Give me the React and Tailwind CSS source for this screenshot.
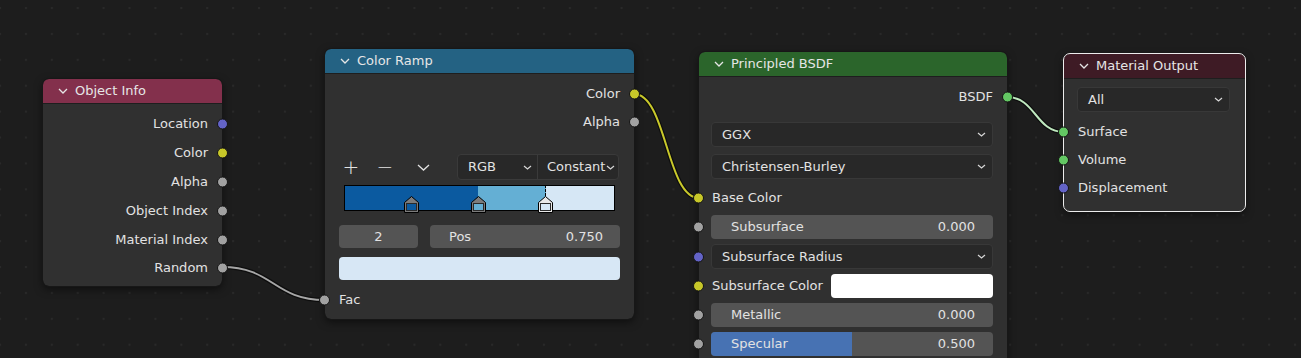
import React from 'react';

const SOCK = {
  vector: 'bg-[#6363c7]',
  color: 'bg-[#c7c729]',
  float: 'bg-[#a1a1a1]',
  shader: 'bg-[#63c763]',
};

const Chevron = ({ className = '' }) => (
  <svg width="10" height="6" viewBox="0 0 10 6" className={className}>
    <path d="M1 1 L5 5 L9 1" fill="none" stroke="currentColor" strokeWidth="1.3" />
  </svg>
);

const SmallChevron = () => (
  <svg width="9" height="5" viewBox="0 0 9 5" className="text-[#d8d8d8]">
    <path d="M1 1 L4.5 4 L8 1" fill="none" stroke="currentColor" strokeWidth="1.2" />
  </svg>
);

const Socket = ({ kind, side }) => (
  <span
    className={`absolute top-1/2 -translate-y-1/2 w-[11px] h-[11px] rounded-full border border-[#141414] ${
      side === 'left' ? '-left-[6px]' : '-right-[6px]'
    } ${SOCK[kind]}`}
  />
);

const Node = ({ title, header, className, selected, children }) => (
  <div
    className={`absolute rounded-[6px] bg-[#303030] shadow-[0_3px_8px_rgba(0,0,0,0.55)] outline outline-1 ${
      selected ? 'outline-[#ececec]' : 'outline-[#171717]'
    } ${className}`}
  >
    <div className={`h-[25px] flex items-center pl-[15px] gap-[7px] rounded-t-[6px] border-b border-[#1e1e1e] text-[#e6e6e6] ${header}`}>
      <Chevron />
      <span>{title}</span>
    </div>
    {children}
  </div>
);

const OutRow = ({ label, kind, h = 'h-[28px]' }) => (
  <div className={`relative flex items-center justify-end pr-[14px] ${h}`}>
    <span>{label}</span>
    <Socket kind={kind} side="right" />
  </div>
);

const InRow = ({ label, kind, pl = 'pl-[14px]' }) => (
  <div className={`relative flex items-center h-[28px] ${pl}`}>
    <Socket kind={kind} side="left" />
    <span>{label}</span>
  </div>
);

const Dropdown = ({ label, className = '' }) => (
  <div className={`h-[25px] flex items-center justify-between pl-[10px] pr-[6px] rounded-[4px] bg-[#282828] border border-[#383838] ${className}`}>
    <span>{label}</span>
    <SmallChevron />
  </div>
);

const NumField = ({ label, value, fill }) => (
  <div className="relative h-[24px] rounded-[4px] bg-[#545454] overflow-hidden">
    {fill && <div className="absolute inset-y-0 left-0 w-1/2 bg-[#4772b3]" />}
    <div className="relative h-full flex items-center justify-between pl-[20px] pr-[18px]">
      <span>{label}</span>
      <span>{value}</span>
    </div>
  </div>
);

const Marker = ({ x, fill, active }) => (
  <svg
    width="15"
    height="17"
    viewBox="0 0 15 17"
    className="absolute top-[11px]"
    style={{ left: x - 7.5 }}
  >
    <path
      d="M0.5 6.5 L7.5 0.5 L14.5 6.5 V16.5 H0.5 Z"
      fill={active ? '#e8e8e8' : '#7c7c7c'}
      stroke="#000"
      strokeWidth="1"
    />
    <rect x="2.5" y="7.5" width="10" height="7" fill={fill} stroke="#2a2a2a" strokeWidth="1" />
  </svg>
);

const wire = (x1, y1, x2, y2) => {
  const d = (x2 - x1) * 0.5;
  return `M${x1} ${y1} C${x1 + d} ${y1} ${x2 - d} ${y2} ${x2} ${y2}`;
};

const WIRES = [
  { d: wire(222, 267, 325, 300), c: '#a6a6a6' },
  { d: wire(634, 94, 699, 198), c: '#c9c92b' },
  { d: wire(1007, 97, 1064, 132), c: '#bfe8bf' },
];

export default function App() {
  return (
    <div className="relative w-[1301px] h-[358px] overflow-hidden bg-[#1d1d1d] text-[13px] text-[#e2e2e2] font-['DejaVu_Sans','Liberation_Sans',sans-serif] select-none">
      <svg className="absolute inset-0" width="1301" height="358">
        <defs>
          <pattern id="dots" x="-1" y="7" width="25.9" height="25.9" patternUnits="userSpaceOnUse">
            <rect x="0" y="0" width="2" height="2" fill="#292929" />
          </pattern>
        </defs>
        <rect width="1301" height="358" fill="url(#dots)" />
        {WIRES.map((w, i) => (
          <g key={i} fill="none">
            <path d={w.d} stroke="#000" strokeOpacity="0.55" strokeWidth="4.5" />
            <path d={w.d} stroke={w.c} strokeWidth="2" />
          </g>
        ))}
      </svg>

      {/* Object Info */}
      <Node title="Object Info" header="bg-[#83304c]" className="left-[43px] top-[79px] w-[179px] h-[207px]">
        <div className="pt-[5px]">
          <OutRow label="Location" kind="vector" h="h-[29px]" />
          <OutRow label="Color" kind="color" h="h-[29px]" />
          <OutRow label="Alpha" kind="float" h="h-[29px]" />
          <OutRow label="Object Index" kind="float" h="h-[29px]" />
          <OutRow label="Material Index" kind="float" h="h-[29px]" />
          <OutRow label="Random" kind="float" h="h-[28px]" />
        </div>
      </Node>

      {/* Color Ramp */}
      <Node title="Color Ramp" header="bg-[#246283]" className="left-[325px] top-[49px] w-[309px] h-[270px]">
        <div className="pt-[6px]">
          <OutRow label="Color" kind="color" />
          <OutRow label="Alpha" kind="float" />
          <div className="mt-[18px] px-[14px] h-[26px] flex items-center">
            <span className="w-[24px] text-center text-[20px] font-light leading-none">+</span>
            <span className="ml-[10px] w-[24px] text-center text-[20px] font-light leading-none">−</span>
            <span className="ml-[14px] w-[24px] flex justify-center">
              <svg width="13" height="7" viewBox="0 0 13 7">
                <path d="M1 1 L6.5 6 L12 1" fill="none" stroke="#e2e2e2" strokeWidth="1.3" />
              </svg>
            </span>
            <div className="ml-[22px] w-[162px] h-[26px] flex rounded-[4px] bg-[#282828] border border-[#3a3a3a]">
              <div className="w-[80px] flex items-center justify-between pl-[10px] pr-[5px] border-r border-[#3a3a3a]">
                <span>RGB</span>
                <SmallChevron />
              </div>
              <div className="flex-1 flex items-center justify-between pl-[9px] pr-[3px] overflow-hidden">
                <span className="whitespace-nowrap">Constant</span>
                <SmallChevron />
              </div>
            </div>
          </div>
          <div className="relative mt-[5px] mx-[19px] h-[26px]">
            <div className="flex h-full border border-black">
              <div className="w-[133px] bg-[#0b5aa0]" />
              <div className="w-[68px] bg-[#64afd4]" />
              <div className="flex-1 bg-[#d6e7f5]" />
            </div>
            <div className="absolute left-[201px] top-0 h-[11px] border-l border-dashed border-black" />
            <Marker x={67} fill="#0b5aa0" />
            <Marker x={134} fill="#64afd4" />
            <Marker x={201} fill="#d6e7f5" active />
          </div>
          <div className="mt-[14px] px-[14px] flex gap-[12px]">
            <div className="w-[79px] h-[23px] rounded-[4px] bg-[#545454] flex items-center justify-center">2</div>
            <div className="flex-1 h-[23px] rounded-[4px] bg-[#545454] flex items-center justify-between pl-[19px] pr-[17px]">
              <span>Pos</span>
              <span>0.750</span>
            </div>
          </div>
          <div className="mt-[9px] mx-[14px] h-[23px] rounded-[4px] bg-[#d7e7f5]" />
          <div className="mt-[6px]">
            <InRow label="Fac" kind="float" />
          </div>
        </div>
      </Node>

      {/* Principled BSDF */}
      <Node title="Principled BSDF" header="bg-[#2b652b]" className="left-[699px] top-[52px] w-[308px] h-[330px]">
        <div className="pt-[6px]">
          <OutRow label="BSDF" kind="shader" />
          <div className="mt-[11px] pl-[12px] pr-[14px] flex flex-col gap-[7px]">
            <Dropdown label="GGX" />
            <Dropdown label="Christensen-Burley" />
          </div>
          <div className="mt-[5px]">
            <InRow label="Base Color" kind="color" pl="pl-[13px]" />
          </div>
          <div className="mt-[3px] flex flex-col gap-[5px]">
            <div className="relative pl-[12px] pr-[14px]">
              <Socket kind="float" side="left" />
              <NumField label="Subsurface" value="0.000" />
            </div>
            <div className="relative pl-[12px] pr-[14px]">
              <Socket kind="vector" side="left" />
              <Dropdown label="Subsurface Radius" className="h-[24px]" />
            </div>
            <div className="relative pl-[13px] pr-[14px] h-[24px] flex items-center">
              <Socket kind="color" side="left" />
              <span className="w-[119px]">Subsurface Color</span>
              <div className="flex-1 h-[24px] rounded-[4px] bg-white" />
            </div>
            <div className="relative pl-[12px] pr-[14px]">
              <Socket kind="float" side="left" />
              <NumField label="Metallic" value="0.000" />
            </div>
            <div className="relative pl-[12px] pr-[14px]">
              <Socket kind="float" side="left" />
              <NumField label="Specular" value="0.500" fill />
            </div>
          </div>
        </div>
      </Node>

      {/* Material Output */}
      <Node title="Material Output" header="bg-[#3e1b25]" className="left-[1064px] top-[54px] w-[181px] h-[157px]" selected>
        <div className="pt-[8px]">
          <div className="pl-[13px] pr-[15px]">
            <Dropdown label="All" />
          </div>
          <div className="mt-[6px]">
            <InRow label="Surface" kind="shader" />
            <InRow label="Volume" kind="shader" />
            <InRow label="Displacement" kind="vector" />
          </div>
        </div>
      </Node>
    </div>
  );
}
